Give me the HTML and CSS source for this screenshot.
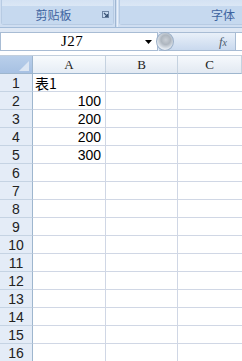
FILE: index.html
```html
<!DOCTYPE html>
<html>
<head>
<meta charset="utf-8">
<link rel="stylesheet" href="styles.css">
</head>
<body>
<div class="app">
  <div class="ribbon">
    <div class="group g1">
      <div class="group-body"></div>
      <div class="group-label"><span>剪贴板</span>
        <svg class="launcher" width="7" height="7" viewBox="0 0 7 7"><rect x="0.5" y="0.5" width="6" height="6" fill="none" stroke="#6d84a3"/><path d="M2 2 L5.5 5.5 M5.5 3 V5.5 H3" stroke="#3c5678" stroke-width="1.2" fill="none"/></svg>
      </div>
    </div>
    <div class="sep"></div>
    <div class="group g2">
      <div class="group-body"></div>
      <div class="group-label right"><span>字体</span></div>
    </div>
  </div>
  <div class="strip"></div>
  <div class="fbar">
    <div class="namebox">
      <span class="ref">J27</span>
      <svg class="arrow" width="7" height="4" viewBox="0 0 7 4"><path d="M0 0 H7 L3.5 4 Z" fill="#000"/></svg>
    </div>
    <div class="formula">
      <div class="knob"></div>
      <span class="fx">f<i>x</i></span>
    </div>
    <div class="fend"></div>
  </div>
  <div class="strip2"></div>
  <div class="sheet">
    <div class="corner"><svg width="33" height="18" viewBox="0 0 33 18"><path d="M29 5 L29 15 L19 15 Z" fill="#dce6f3"/></svg></div>
    <div class="ch sel">A</div>
    <div class="ch">B</div>
    <div class="ch last">C</div>

    <div class="rh">1</div><div class="cell txt">表1</div><div class="cell"></div><div class="cell last"></div>
    <div class="rh">2</div><div class="cell num">100</div><div class="cell"></div><div class="cell last"></div>
    <div class="rh">3</div><div class="cell num">200</div><div class="cell"></div><div class="cell last"></div>
    <div class="rh">4</div><div class="cell num">200</div><div class="cell"></div><div class="cell last"></div>
    <div class="rh">5</div><div class="cell num">300</div><div class="cell"></div><div class="cell last"></div>
    <div class="rh">6</div><div class="cell"></div><div class="cell"></div><div class="cell last"></div>
    <div class="rh">7</div><div class="cell"></div><div class="cell"></div><div class="cell last"></div>
    <div class="rh">8</div><div class="cell"></div><div class="cell"></div><div class="cell last"></div>
    <div class="rh">9</div><div class="cell"></div><div class="cell"></div><div class="cell last"></div>
    <div class="rh">10</div><div class="cell"></div><div class="cell"></div><div class="cell last"></div>
    <div class="rh">11</div><div class="cell"></div><div class="cell"></div><div class="cell last"></div>
    <div class="rh">12</div><div class="cell"></div><div class="cell"></div><div class="cell last"></div>
    <div class="rh">13</div><div class="cell"></div><div class="cell"></div><div class="cell last"></div>
    <div class="rh">14</div><div class="cell"></div><div class="cell"></div><div class="cell last"></div>
    <div class="rh">15</div><div class="cell"></div><div class="cell"></div><div class="cell last"></div>
    <div class="rh">16</div><div class="cell"></div><div class="cell"></div><div class="cell last"></div>
  </div>
</div>
</body>
</html>
```

FILE: styles.css
```css
* { box-sizing: border-box; }
html, body { margin: 0; padding: 0; background: #fff; }
body { width: 242px; height: 361px; overflow: hidden; font-family: "Liberation Sans", sans-serif; }

.app { display: flex; flex-direction: column; }

.ribbon { height: 28px; display: flex; background: #cfdef1; border-bottom: 1px solid #a3bcd9; }
.group { display: flex; flex-direction: column; border: 1px solid #b7cbe3; border-top: none; border-radius: 0 0 3px 3px; margin-bottom: 2px; }
.g1 { width: 113px; margin-left: 1px; }
.g2 { flex: 1; margin-right: -4px; }
.sep { width: 3px; border-left: 1px solid #9fb6d2; border-right: 1px solid #e9f0f9; margin: 0 1px; }
.group-body { height: 6px; background: linear-gradient(#d4e2f3, #dbe7f5); }
.group-label { flex: 1; background: #c6d9ef; display: flex; align-items: center; justify-content: center; position: relative; font-family: "Noto Sans CJK SC", sans-serif; font-size: 12px; color: #3e64a0; line-height: 1; }
.group-label.right { justify-content: flex-end; padding-right: 10px; }
.group-label span { margin-left: -8px; }
.launcher { position: absolute; right: 4px; top: 5px; }

.strip { height: 4px; background: #dfe8f4; }
.fbar { height: 19px; display: flex; background: #dfe8f4; }
.namebox { width: 158px; background: #fff; border: 1px solid #a8bcd4; display: flex; align-items: center; position: relative; }
.ref { font-family: "Liberation Serif", serif; font-size: 15px; margin-left: 60px; letter-spacing: 0.5px; }
.arrow { position: absolute; right: 5px; top: 7px; }
.formula { flex: 1; margin-left: 1px; border: 1px solid #a8bcd4; border-left: none; background: linear-gradient(#e9f0f9, #c9d9ee); display: flex; align-items: center; justify-content: flex-end; position: relative; padding-right: 8px; }
.knob { position: absolute; left: -3px; top: -1px; width: 18px; height: 19px; border-radius: 50%; background: radial-gradient(circle at 55% 40%, #c9cfd6 0, #aeb6bf 35%, #e6ecf3 70%); border: 1px solid #9cb0c8; }
.fx { font-family: "Liberation Serif", serif; font-style: italic; font-size: 13px; color: #4b5a6c; }
.fx i { font-size: 10px; }
.fend { width: 6px; background: #fff; border-top: 1px solid #a8bcd4; border-bottom: 1px solid #a8bcd4; }
.strip2 { height: 5px; background: #fff; border-top: 1px solid #fff; border-bottom: 1px solid #c2cfdd; margin-top: 0; }

.sheet { display: grid; grid-template-columns: 33px 73px 72px 1fr; grid-auto-rows: 18px; }
.corner { background: linear-gradient(#b9cfea, #a7c1e3); border-right: 1px solid #9eb6ce; border-bottom: 1px solid #9eb6ce; }
.corner svg { display: block; }
.ch { background: linear-gradient(#f6f9fc, #e2e9f2); border-right: 1px solid #c5d2e0; border-bottom: 1px solid #9eb6ce; font-family: "Liberation Serif", serif; font-size: 13px; color: #222; display: flex; align-items: center; justify-content: center; }
.ch.sel { background: linear-gradient(#f8fbfd, #e6edf5); }
.rh { background: #e4ecf7; border-right: 1px solid #9eb6ce; border-bottom: 1px solid #c5d3e3; font-family: "Liberation Sans", sans-serif; font-size: 14px; color: #222; display: flex; align-items: center; justify-content: center; padding-top: 1px; }
.cell { border-right: 1px solid #d0d7e5; border-bottom: 1px solid #d0d7e5; font-size: 14px; display: flex; align-items: center; color: #000; }
.cell.last { border-right: none; }
.txt { font-family: "Noto Sans CJK SC", sans-serif; padding-left: 2px; font-size: 14px; }
.num { justify-content: flex-end; padding-right: 4px; font-family: "Liberation Sans", sans-serif; }
```
